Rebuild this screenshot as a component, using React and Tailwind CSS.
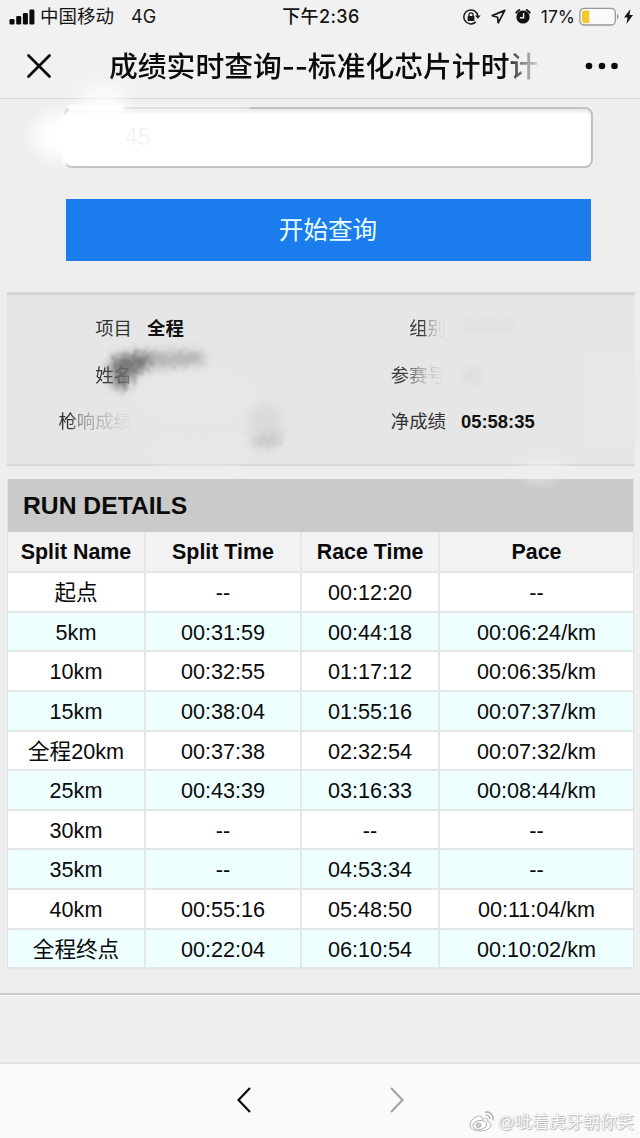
import React from "react";

const splits = [
    { name: "起点", split: "--", race: "00:12:20", pace: "--" },
    { name: "5km", split: "00:31:59", race: "00:44:18", pace: "00:06:24/km" },
    { name: "10km", split: "00:32:55", race: "01:17:12", pace: "00:06:35/km" },
    { name: "15km", split: "00:38:04", race: "01:55:16", pace: "00:07:37/km" },
    { name: "全程20km", split: "00:37:38", race: "02:32:54", pace: "00:07:32/km" },
    { name: "25km", split: "00:43:39", race: "03:16:33", pace: "00:08:44/km" },
    { name: "30km", split: "--", race: "--", pace: "--" },
    { name: "35km", split: "--", race: "04:53:34", pace: "--" },
    { name: "40km", split: "00:55:16", race: "05:48:50", pace: "00:11:04/km" },
    { name: "全程终点", split: "00:22:04", race: "06:10:54", pace: "00:10:02/km" },
];

const StatusBar = () => (
    <div className="h-8 pt-px flex items-center justify-between pl-[9px] pr-[7px] text-[18px] text-[#151515] font-['Inter','Noto_Sans_CJK_SC',sans-serif]">
        <div className="flex items-center w-[260px]">
            <svg className="w-[26px] h-[16px] shrink-0" viewBox="0 0 26 16" fill="#0c0c0c">
                <rect x="0.5" y="10" width="5" height="5.5" rx="1.2" />
                <rect x="7.2" y="7" width="5" height="8.5" rx="1.2" />
                <rect x="13.9" y="4" width="5" height="11.5" rx="1.2" />
                <rect x="20.4" y="0.5" width="5" height="15" rx="1.2" />
            </svg>
            <span className="ml-[5px] text-[18.5px] leading-none">中国移动</span>
            <span className="ml-[17px] text-[18px] leading-none">4G</span>
        </div>
        <span className="text-[18px] leading-none font-medium whitespace-nowrap tracking-[0.4px]">下午2:36</span>
        <div className="flex items-center justify-end w-[260px]">
            <svg className="w-[18px] h-[16px]" viewBox="0 0 18 16" fill="none" stroke="#1a1a1a" strokeWidth="1.5">
                <path d="M12.8 12.9A7 7 0 1 1 14.8 7" />
                <path d="M12 6.6h5.6l-2.8 3.2z" fill="#1a1a1a" stroke="none" />
                <rect x="4.6" y="7" width="6.8" height="5" rx="0.7" fill="#1a1a1a" stroke="none" />
                <path d="M6 7.5V5.8a2 2 0 0 1 4 0v1.7" strokeWidth="1.3" />
            </svg>
            <svg className="w-[15px] h-[15px] ml-[10px]" viewBox="0 0 15 15" fill="none" stroke="#1a1a1a" strokeWidth="1.7" strokeLinejoin="round">
                <path d="M13.8 1.4L1.200 6.600l5.400 1.600.6 5.600z" />
            </svg>
            <svg className="w-[16px] h-[17px] ml-[9px]" viewBox="0 0 16 17">
                <circle cx="8" cy="9" r="6.6" fill="#111" />
                <path d="M1.300 4.600A14 14 0 0 1 4.300 2M14.700 4.600A14 14 0 0 0 11.700 2" stroke="#111" strokeWidth="2" strokeLinecap="round" />
                <path d="M8.600 5v4.700H4.900" fill="none" stroke="#f4f4f4" strokeWidth="1.4" />
            </svg>
            <span className="ml-[10px] text-[17.5px] leading-none">17%</span>
            <svg className="w-[41px] h-[20px] ml-[4px]" viewBox="0 0 41 20">
                <rect x="0.9" y="1.4" width="35.4" height="16.6" rx="4" fill="#fafafa" stroke="#999" strokeWidth="1.3" />
                <path d="M5 3.500h5.300v12.600H5a2 2 0 0 1-2-2V5.500a2 2 0 0 1 2-2z" fill="#f5c92e" />
                <path d="M38 7v5.500c1-.5 1.600-1.500 1.600-2.700S39 7.500 38 7z" fill="#999" />
            </svg>
            <svg className="w-[9px] h-[15px] ml-[4px]" viewBox="0 0 9 15" fill="#111">
                <path d="M6.500 0L0 8.600h3.600L2.400 15 9 6H5.400z" />
            </svg>
        </div>
    </div>
);

const TitleBar = () => (
    <div className="h-[67px] flex items-center pl-[27px] pr-[21px] border-b border-[#d6d6d8]">
        <svg className="w-6 h-6 mt-px" viewBox="0 0 24 24" fill="none" stroke="#0b0b0b" strokeWidth="2.7" strokeLinecap="round">
            <path d="M1.500 1.500l21 21M22.500 1.500l-21 21" />
        </svg>
        <h1 className="mt-[3px] ml-[58px] w-[436px] overflow-hidden whitespace-nowrap text-[28.8px] leading-[40px] font-medium bg-[linear-gradient(to_right,#0b0b0b_91%,#8a8a8a_95%,#f1f1f2_100%)] bg-clip-text text-transparent font-['Inter','Noto_Sans_CJK_SC',sans-serif]">
            成绩实时查询<span className="tracking-[-0.3px]">--</span>标准化芯片计时计
        </h1>
        <svg className="ml-auto mt-px w-[34px] h-2" viewBox="0 0 34 8" fill="#0b0b0b">
            <circle cx="4" cy="4" r="3.300" />
            <circle cx="17" cy="4" r="3.300" />
            <circle cx="29.500" cy="4" r="3.300" />
        </svg>
    </div>
);

// Soft white brush marks over the bib number field
const FieldSmudge = () => (
    <svg className="absolute left-0 top-[-35px] w-[270px] h-[125px] pointer-events-none" viewBox="0 -10 270 125">
        <defs>
            <filter id="soft" x="-50%" y="-50%" width="200%" height="200%">
                <feGaussianBlur stdDeviation="8" />
            </filter>
            <filter id="soft2" filterUnits="userSpaceOnUse" x="40" y="20" width="230" height="90">
                <feGaussianBlur stdDeviation="1.500" />
            </filter>
        </defs>
        <ellipse cx="58" cy="62" rx="25" ry="23" fill="#fff" filter="url(#soft)" />
        <ellipse cx="103" cy="28" rx="25" ry="18" fill="#fff" opacity="0.700" filter="url(#soft)" />
        <path d="M65 40v50" stroke="#fff" strokeWidth="7" filter="url(#soft2)" />
        <path d="M68 34h55" stroke="#fff" strokeWidth="6" filter="url(#soft2)" />
        <path d="M120 34h130" stroke="#fff" strokeWidth="3" opacity="0.700" filter="url(#soft2)" />
    </svg>
);

const QueryForm = () => (
    <div className="relative h-[193px] pt-2 pl-16">
        <div className="w-[529px] h-[61px] rounded-lg bg-white border-2 border-[#c2c2c4] shadow-[inset_0_3px_3px_#ececec] flex items-center pl-[59px] text-[23px] text-[#f4f4f4] font-['Liberation_Sans',sans-serif]">45</div>
        <FieldSmudge />
        <button className="mt-[31px] ml-[1.5px] w-[525px] h-[62px] pb-[3px] bg-[#1b7ced] text-[#eaffff] text-[24.6px] font-['Noto_Sans_CJK_SC',sans-serif]">
            开始查询
        </button>
    </div>
);

const InfoCell = ({ label, value, labelClass }) => (
    <div className="flex items-center h-[46.5px] gap-[15px]">
        <span className={`w-[125px] text-right text-[18.4px] whitespace-nowrap ${labelClass}`}>{label}</span>
        <span className="font-bold text-[18.400px] text-[#111]">{value}</span>
    </div>
);

// Grainy eraser strokes over the runner's personal data
const InfoSmudge = () => (
    <svg className="absolute left-0 top-0 w-[640px] h-[200px] pointer-events-none" viewBox="0 0 640 200">
        <defs>
            <filter id="grain" x="-30%" y="-60%" width="160%" height="220%">
                <feGaussianBlur stdDeviation="5" result="b" />
                <feTurbulence type="fractalNoise" baseFrequency="0.180" numOctaves="2" seed="4" />
                <feDisplacementMap in="b" scale="10" />
                <feGaussianBlur stdDeviation="0.800" />
            </filter>
            <filter id="blur" x="-30%" y="-30%" width="160%" height="160%">
                <feGaussianBlur stdDeviation="6" />
            </filter>
        </defs>
        <path d="M112 66c14-6 28-5 44-5l-5 13-17 9-8 14-13-2-3-16z" fill="#666" opacity="0.850" filter="url(#grain)" />
        <path d="M150 60l52-1 4 13-52 5z" fill="#a8a8a8" opacity="0.800" filter="url(#grain)" />
        <path d="M250 114l28-2 5 26-12 6-22-2z" fill="#d6d6d6" opacity="0.700" filter="url(#grain)" />
        <path d="M250 145l32-5-2 12-26 5z" fill="#bcbcbc" opacity="0.800" filter="url(#grain)" />
        <ellipse cx="195" cy="104" rx="58" ry="23" fill="#e8e8e8" filter="url(#blur)" />
        <path d="M150 150h110l-30 26h-70z" fill="#e8e8e8" opacity="0.700" filter="url(#blur)" />
        <path d="M462 30h54v8h-54zM462 76h20v14h-20z" fill="#d9d9d9" opacity="0.600" filter="url(#grain)" />
        <path d="M590 70h56v80h-56z" fill="#e9e9eb" opacity="0.700" filter="url(#blur)" />
        <path d="M520 168h50l-18 22h-26z" fill="#eeeeee" opacity="0.600" filter="url(#blur)" />
    </svg>
);

const RunnerInfo = () => (
    <div className="relative">
        <div className="ml-[7px] w-[628px] h-[174px] pt-[11px] grid grid-cols-[314px_314px] auto-rows-min bg-[#e6e6e6] border-t-[3px] border-b-2 border-t-[#d5d5d5] border-b-[#d8d8d8] text-[#333] font-['Liberation_Sans','Noto_Sans_CJK_SC',sans-serif]">
            <InfoCell label="项目" value="全程" labelClass="" />
            <InfoCell label="组别" value="" labelClass="bg-[linear-gradient(to_right,#333_81%,#aaa_88%,#dedede_97%)] bg-clip-text text-transparent" />
            <InfoCell label="姓名" value="" labelClass="bg-[linear-gradient(to_right,#333_85%,#888_100%)] bg-clip-text text-transparent" />
            <InfoCell label="参赛号" value="" labelClass="bg-[linear-gradient(to_right,#333_65%,#aaa_80%,#dedede_95%)] bg-clip-text text-transparent" />
            <InfoCell label="枪响成绩" value="" labelClass="bg-[linear-gradient(to_right,#333_50%,#999_60%,#e0e0e0_98%)] bg-clip-text text-transparent" />
            <InfoCell label="净成绩" value="05:58:35" labelClass="" />
        </div>
        <InfoSmudge />
    </div>
);

const RunDetails = () => (
    <div className="mt-[13px] ml-[7px] w-[627px] border-l border-r border-[#e2e2e4] text-center text-[#0a0a0a] font-['Liberation_Sans','Noto_Sans_CJK_SC',sans-serif]">
        <h2 className="h-[53px] pl-[15px] bg-[#cacaca] text-left text-[24.700px] leading-[53px] font-bold">RUN DETAILS</h2>
        <div className="grid grid-cols-[138px_156px_138px_1fr] h-[41px] border-b-2 border-[#e6e6e7] bg-[#f2f2f3] text-[21.400px] leading-[41px] font-bold">
            <div className="border-r-2 border-[#e6e6e7]">Split Name</div>
            <div className="border-r-2 border-[#e6e6e7]">Split Time</div>
            <div className="border-r-2 border-[#e6e6e7]">Race Time</div>
            <div>Pace</div>
        </div>
        {splits.map((row) => (
            <div
                key={row.name}
                className="grid grid-cols-[138px_156px_138px_1fr] h-[39.630px] border-b-2 border-[#e3e7e7] nth-[even]:bg-[#edfffe] nth-[odd]:bg-white text-[21.600px] leading-[39px]"
            >
                <div className="border-r-2 border-[#e3e7e7]">{row.name}</div>
                <div className="border-r-2 border-[#e3e7e7]">{row.split}</div>
                <div className="border-r-2 border-[#e3e7e7]">{row.race}</div>
                <div>{row.pace}</div>
            </div>
        ))}
    </div>
);

const BottomBar = () => (
    <div className="relative h-[76px] bg-[#fafafc] border-t-2 border-[#e1e1e3] flex justify-center gap-[139px] pt-[23px]">
        <svg className="w-[14px] h-[26px]" viewBox="0 0 14 26" fill="none" stroke="#0b0b0b" strokeWidth="2.200">
            <path d="M13 1L1.500 13 13 25" />
        </svg>
        <svg className="w-[14px] h-[26px]" viewBox="0 0 14 26" fill="none" stroke="#a5a5a7" strokeWidth="2.200">
            <path d="M1 1l11.500 12L1 25" />
        </svg>
        <div className="absolute right-[6px] bottom-[3px] flex items-center gap-[3px]">
            <svg className="w-[26px] h-[21px] mb-[3px]" viewBox="0 0 26 21" fill="none" stroke="#b0b0b2" strokeWidth="1">
                <path d="M10.500 5C6 5 1 10 1 14c0 8 20 8 21 0 0-2-1.500-3-3.500-3.400.8-3-1.500-4-5.500-2.300C13.800 6 12.600 5 10.500 5z" fill="#fff" />
                <ellipse cx="10.800" cy="14" rx="7" ry="4.500" transform="rotate(-8 10.800 14)" />
                <circle cx="9.500" cy="14.300" r="2.300" fill="#ccc" />
                <path d="M16 1.300c5-1.200 9.200 3 7.700 8M16.800 4.400c2.500-.6 4.400 1.400 3.800 3.800" strokeWidth="1.400" />
            </svg>
            <span className="text-[17px] leading-[24px] text-[#fdfdfd] [text-shadow:0_0_1px_#999,1px_1px_1px_#bbb] whitespace-nowrap font-['Liberation_Sans','Noto_Sans_CJK_SC',sans-serif]">@呲着虎牙朝你笑</span>
        </div>
    </div>
);

export default function App() {
    return (
        <div className="w-[640px] h-[1138px] overflow-hidden flex flex-col bg-[#eeeeef]">
            <div className="bg-[#f1f1f2]">
                <StatusBar />
                <TitleBar />
            </div>
            <QueryForm />
            <RunnerInfo />
            <RunDetails />
            <div className="mt-auto h-[69px] border-t-2 border-[#cbcbcd] shadow-[inset_0_1px_0_#fff]" />
            <BottomBar />
        </div>
    );
}
